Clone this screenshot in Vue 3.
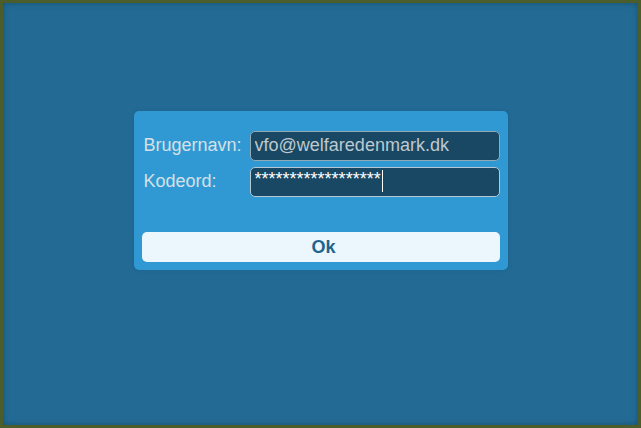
<script setup>
import { ref } from 'vue'

const username = ref('vfo@welfaredenmark.dk')
const password = ref('*'.repeat(18))
</script>

<template>
  <main class="screen">
    <form class="panel" @submit.prevent>
      <label class="label" for="username">Brugernavn:</label>
      <div class="field">
        <input id="username" v-model="username" class="input" type="text" autocomplete="off" spellcheck="false" />
      </div>
      <label class="label" for="password">Kodeord:</label>
      <div class="field">
        <input id="password" v-model="password" class="input active" type="text" autocomplete="off" spellcheck="false" />
        <span class="caret" aria-hidden="true"></span>
      </div>
      <button class="submit" type="submit">Ok</button>
    </form>
  </main>
</template>

<style>
body {
  margin: 0;
}
</style>

<style scoped>
.screen {
  box-sizing: border-box;
  min-height: 100vh;
  padding: 108px 16px 16px;
  border: 3px solid #4b5d2b;
  background: #236b95;
  box-shadow: inset 0 0 6px #17506f;
  font-family: "Liberation Sans", Arial, sans-serif;
  font-size: 18px;
}

.panel {
  box-sizing: border-box;
  display: grid;
  grid-template-columns: auto 1fr;
  align-items: center;
  gap: 6px 8px;
  max-width: 374px;
  margin: 0 auto;
  padding: 20px 8px 8px;
  border-radius: 5px;
  background: #3099d3;
  box-shadow: 0 0 4px #1d608a;
}

.label {
  padding: 0 0 2px 2px;
  line-height: 24px;
  color: #d6e0e6;
}

.field {
  position: relative;
}

.input {
  box-sizing: border-box;
  display: block;
  width: 100%;
  height: 30px;
  padding: 0 4px 2px;
  border: 1px solid #92a9b7;
  border-radius: 5px;
  outline: none;
  background: #184863;
  color: #bfc9ce;
  font: inherit;
}

.input.active {
  padding-bottom: 6px;
  border-color: #b5c8d3;
  color: #ffffff;
}

.caret {
  position: absolute;
  top: 3px;
  left: 132px;
  width: 1px;
  height: 22px;
  background: #ffffff;
}

.submit {
  grid-column: 1 / -1;
  height: 30px;
  margin-top: 29px;
  padding: 0 0 0 6px;
  border: 0;
  border-radius: 5px;
  background: #ebf6fd;
  color: #1d648c;
  font: inherit;
  font-weight: bold;
}
</style>
